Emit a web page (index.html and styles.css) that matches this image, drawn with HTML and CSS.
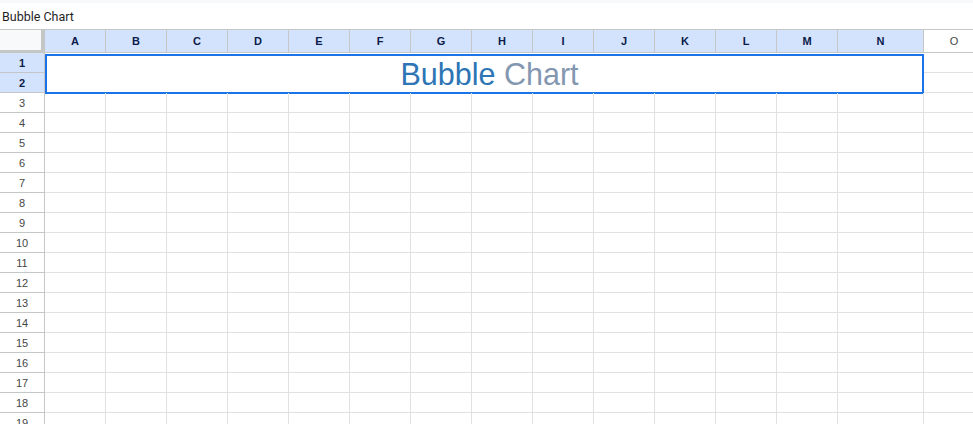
FILE: index.html
```html
<!DOCTYPE html>
<html>
<head>
<meta charset="utf-8">
<link rel="stylesheet" href="styles.css">
</head>
<body>
<div class="formula-bar"><span class="formula-text">Bubble Chart</span></div>
<div class="sheet">
  <div class="corner"></div>
  <div class="ch sel">A</div><div class="ch sel">B</div><div class="ch sel">C</div><div class="ch sel">D</div><div class="ch sel">E</div><div class="ch sel">F</div><div class="ch sel">G</div><div class="ch sel">H</div><div class="ch sel">I</div><div class="ch sel">J</div><div class="ch sel">K</div><div class="ch sel">L</div><div class="ch sel">M</div><div class="ch sel">N</div><div class="ch">O</div>

  <div class="rh sel">1</div>
  <div class="merged"><span class="t-blue">Bubble</span>&nbsp;<span class="t-gray">Chart</span></div>
  <div class="c"></div>
  <div class="rh sel">2</div>
  <div class="c"></div>

  <div class="rh">3</div><div class="c"></div><div class="c"></div><div class="c"></div><div class="c"></div><div class="c"></div><div class="c"></div><div class="c"></div><div class="c"></div><div class="c"></div><div class="c"></div><div class="c"></div><div class="c"></div><div class="c"></div><div class="c"></div><div class="c"></div>
  <div class="rh">4</div><div class="c"></div><div class="c"></div><div class="c"></div><div class="c"></div><div class="c"></div><div class="c"></div><div class="c"></div><div class="c"></div><div class="c"></div><div class="c"></div><div class="c"></div><div class="c"></div><div class="c"></div><div class="c"></div><div class="c"></div>
  <div class="rh">5</div><div class="c"></div><div class="c"></div><div class="c"></div><div class="c"></div><div class="c"></div><div class="c"></div><div class="c"></div><div class="c"></div><div class="c"></div><div class="c"></div><div class="c"></div><div class="c"></div><div class="c"></div><div class="c"></div><div class="c"></div>
  <div class="rh">6</div><div class="c"></div><div class="c"></div><div class="c"></div><div class="c"></div><div class="c"></div><div class="c"></div><div class="c"></div><div class="c"></div><div class="c"></div><div class="c"></div><div class="c"></div><div class="c"></div><div class="c"></div><div class="c"></div><div class="c"></div>
  <div class="rh">7</div><div class="c"></div><div class="c"></div><div class="c"></div><div class="c"></div><div class="c"></div><div class="c"></div><div class="c"></div><div class="c"></div><div class="c"></div><div class="c"></div><div class="c"></div><div class="c"></div><div class="c"></div><div class="c"></div><div class="c"></div>
  <div class="rh">8</div><div class="c"></div><div class="c"></div><div class="c"></div><div class="c"></div><div class="c"></div><div class="c"></div><div class="c"></div><div class="c"></div><div class="c"></div><div class="c"></div><div class="c"></div><div class="c"></div><div class="c"></div><div class="c"></div><div class="c"></div>
  <div class="rh">9</div><div class="c"></div><div class="c"></div><div class="c"></div><div class="c"></div><div class="c"></div><div class="c"></div><div class="c"></div><div class="c"></div><div class="c"></div><div class="c"></div><div class="c"></div><div class="c"></div><div class="c"></div><div class="c"></div><div class="c"></div>
  <div class="rh">10</div><div class="c"></div><div class="c"></div><div class="c"></div><div class="c"></div><div class="c"></div><div class="c"></div><div class="c"></div><div class="c"></div><div class="c"></div><div class="c"></div><div class="c"></div><div class="c"></div><div class="c"></div><div class="c"></div><div class="c"></div>
  <div class="rh">11</div><div class="c"></div><div class="c"></div><div class="c"></div><div class="c"></div><div class="c"></div><div class="c"></div><div class="c"></div><div class="c"></div><div class="c"></div><div class="c"></div><div class="c"></div><div class="c"></div><div class="c"></div><div class="c"></div><div class="c"></div>
  <div class="rh">12</div><div class="c"></div><div class="c"></div><div class="c"></div><div class="c"></div><div class="c"></div><div class="c"></div><div class="c"></div><div class="c"></div><div class="c"></div><div class="c"></div><div class="c"></div><div class="c"></div><div class="c"></div><div class="c"></div><div class="c"></div>
  <div class="rh">13</div><div class="c"></div><div class="c"></div><div class="c"></div><div class="c"></div><div class="c"></div><div class="c"></div><div class="c"></div><div class="c"></div><div class="c"></div><div class="c"></div><div class="c"></div><div class="c"></div><div class="c"></div><div class="c"></div><div class="c"></div>
  <div class="rh">14</div><div class="c"></div><div class="c"></div><div class="c"></div><div class="c"></div><div class="c"></div><div class="c"></div><div class="c"></div><div class="c"></div><div class="c"></div><div class="c"></div><div class="c"></div><div class="c"></div><div class="c"></div><div class="c"></div><div class="c"></div>
  <div class="rh">15</div><div class="c"></div><div class="c"></div><div class="c"></div><div class="c"></div><div class="c"></div><div class="c"></div><div class="c"></div><div class="c"></div><div class="c"></div><div class="c"></div><div class="c"></div><div class="c"></div><div class="c"></div><div class="c"></div><div class="c"></div>
  <div class="rh">16</div><div class="c"></div><div class="c"></div><div class="c"></div><div class="c"></div><div class="c"></div><div class="c"></div><div class="c"></div><div class="c"></div><div class="c"></div><div class="c"></div><div class="c"></div><div class="c"></div><div class="c"></div><div class="c"></div><div class="c"></div>
  <div class="rh">17</div><div class="c"></div><div class="c"></div><div class="c"></div><div class="c"></div><div class="c"></div><div class="c"></div><div class="c"></div><div class="c"></div><div class="c"></div><div class="c"></div><div class="c"></div><div class="c"></div><div class="c"></div><div class="c"></div><div class="c"></div>
  <div class="rh">18</div><div class="c"></div><div class="c"></div><div class="c"></div><div class="c"></div><div class="c"></div><div class="c"></div><div class="c"></div><div class="c"></div><div class="c"></div><div class="c"></div><div class="c"></div><div class="c"></div><div class="c"></div><div class="c"></div><div class="c"></div>
  <div class="rh">19</div><div class="c"></div><div class="c"></div><div class="c"></div><div class="c"></div><div class="c"></div><div class="c"></div><div class="c"></div><div class="c"></div><div class="c"></div><div class="c"></div><div class="c"></div><div class="c"></div><div class="c"></div><div class="c"></div><div class="c"></div>
</div>
</body>
</html>
```
FILE: styles.css
```css
html, body {
  margin: 0;
  padding: 0;
  background: #ffffff;
  overflow: hidden;
}

body {
  width: 973px;
  height: 424px;
  font-family: "Liberation Sans", Arial, sans-serif;
}

.formula-bar {
  height: 26px;
  border-top: 3px solid #f8f9fa;
  border-bottom: 1px solid #c4c7c5;
  display: flex;
  align-items: center;
  padding-left: 2px;
  background: #ffffff;
}

.formula-text {
  font-family: Roboto, "Liberation Sans", sans-serif;
  font-size: 12.5px;
  color: #1f1f1f;
}

.sheet {
  display: grid;
  grid-template-columns: 45px repeat(13, 61px) 86px 61px;
  grid-template-rows: 23px;
  grid-auto-rows: 20px;
  width: 1040px;
}

.corner {
  box-sizing: border-box;
  background: #f8f9fa;
  border-right: 4px solid #c4c7c5;
  border-bottom: 3px solid #c4c7c5;
}

.ch {
  box-sizing: border-box;
  border-right: 1px solid #c4c7c5;
  border-bottom: 1px solid #c4c7c5;
  display: flex;
  align-items: center;
  justify-content: center;
  font-size: 11px;
  color: #444746;
  background: #ffffff;
}

.ch.sel {
  background: #d3e3fd;
  color: #0b1b4a;
  font-weight: bold;
}

.rh {
  box-sizing: border-box;
  border-right: 1px solid #c4c7c5;
  border-bottom: 1px solid #c4c7c5;
  display: flex;
  align-items: center;
  justify-content: center;
  font-size: 11px;
  color: #444746;
  background: #ffffff;
}

.rh.sel {
  background: #d3e3fd;
  color: #0b1b4a;
  font-weight: bold;
}

.c {
  box-sizing: border-box;
  border-right: 1px solid #e1e1e1;
  border-bottom: 1px solid #e1e1e1;
}

.merged {
  grid-column: 2 / 16;
  grid-row: 2 / 4;
  box-sizing: border-box;
  border: 2px solid #1a73e8;
  margin: 1px 0 -1px 0;
  display: flex;
  align-items: center;
  justify-content: center;
  padding-left: 10px;
  font-size: 30.5px;
  white-space: nowrap;
  background: #ffffff;
}

.t-blue {
  color: #2e75b6;
}

.t-gray {
  color: #8497b0;
}
```
